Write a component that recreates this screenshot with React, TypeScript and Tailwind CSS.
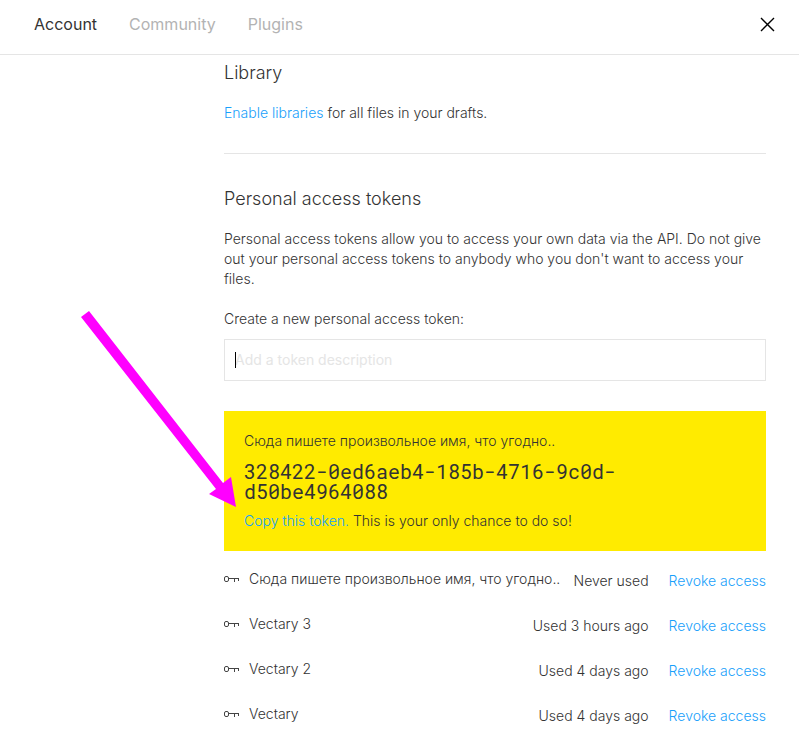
const tabs = ["Account", "Community", "Plugins"];

const tokens = [
  { id: 1, name: "Сюда пишете произвольное имя, что угодно..", used: "Never used" },
  { id: 2, name: "Vectary 3", used: "Used 3 hours ago" },
  { id: 3, name: "Vectary 2", used: "Used 4 days ago" },
  { id: 4, name: "Vectary", used: "Used 4 days ago" },
];

const CloseIcon = () => (
  <svg width="15" height="15" viewBox="0 0 15 15" fill="none" stroke="currentColor" strokeWidth="1.4">
    <path d="M1 1L14 14M14 1L1 14" />
  </svg>
);

const KeyIcon = () => (
  <svg width="15" height="8" viewBox="0 0 15 8" fill="none" stroke="#444" className="shrink-0">
    <rect x="0.5" y="1.5" width="4" height="5" rx="1.5" />
    <path d="M4.5 3.5H15M10.5 3.5V7M14.5 3.5V6" />
  </svg>
);

const App = () => {
  return (
    <div className="min-h-screen bg-white font-[Inter,sans-serif] text-sm leading-5 font-light text-[#333]">
      {/* Top bar */}
      <header className="flex h-[55px] items-center justify-between border-b border-[#e5e5e5] pr-6 pb-[6px] pl-[34px]">
        <nav className="flex gap-8 text-base font-normal">
          {tabs.map((tab, index) => (
            <button key={tab} className={index === 0 ? "text-[#333]" : "text-[#b3b3b3]"}>
              {tab}
            </button>
          ))}
        </nav>
        <button aria-label="Close" className="text-black">
          <CloseIcon />
        </button>
      </header>

      <main className="mr-[33px] ml-56">
        {/* Library */}
        <section className="border-b border-[#e5e5e5] pt-2 pb-[30px]">
          <h2 className="text-lg leading-5 font-light">Library</h2>
          <p className="mt-5">
            <a href="#libraries" className="text-[#18a0fb]">Enable libraries</a> for all files in your drafts.
          </p>
        </section>

        {/* Tokens */}
        <section className="pt-[35px]">
          <h2 className="text-lg leading-5 font-light">Personal access tokens</h2>
          <p className="mt-5">
            Personal access tokens allow you to access your own data via the API. Do not give out
            your personal access tokens to anybody who you don't want to access your files.
          </p>
          <label htmlFor="token" className="mt-5 block">Create a new personal access token:</label>
          <div className="relative mt-[10px]">
            <input
              id="token"
              type="text"
              placeholder="Add a token description"
              className="block h-[42px] w-full border border-[#e5e5e5] px-[10px] pb-[2px] font-normal outline-none placeholder:text-[#e5e5e5]"
            />
            <span className="absolute top-[13px] left-[11px] h-4 w-px bg-black" />
          </div>

          <div className="mt-[30px] bg-[#ffeb00] p-5">
            <p>Сюда пишете произвольное имя, что угодно..</p>
            <p className="my-[10px] font-[Roboto_Mono,DejaVu_Sans_Mono,monospace] text-xl leading-5 font-normal">
              328422-0ed6aeb4-185b-4716-9c0d-d50be4964088
            </p>
            <p>
              <button className="text-[#18a0fb]">Copy this token.</button> This is your only chance to do so!
            </p>
          </div>

          <ul className="pt-[18px]">
            {tokens.map((token) => (
              <li key={token.id} className="flex h-[45px] items-start">
                <span className="flex flex-1 items-center gap-[10px]">
                  <KeyIcon />
                  {token.name}
                </span>
                <span className="mt-[2px]">{token.used}</span>
                <button className="mt-[2px] ml-5 text-[#18a0fb]">Revoke access</button>
              </li>
            ))}
          </ul>
        </section>
      </main>

      {/* Pointer to the copy link */}
      <svg className="pointer-events-none absolute top-[310px] left-20" width="158" height="198" viewBox="80 310 158 198">
        <path d="M81 317L89 311L223 483L231 477L236 507L209 494L216 489Z" fill="#f0f" />
      </svg>
    </div>
  );
};

export default App;
